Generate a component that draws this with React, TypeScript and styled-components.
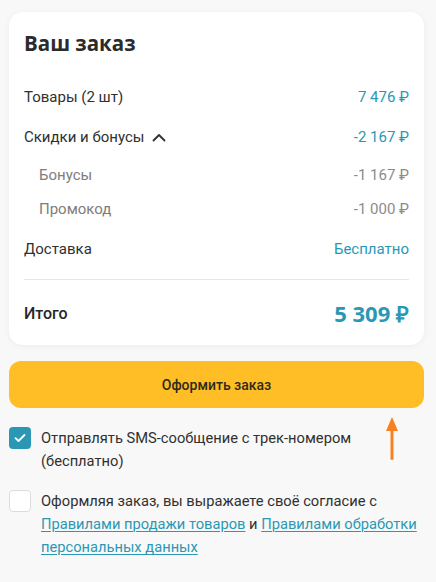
import React, { useState } from 'react';
import styled, { createGlobalStyle } from 'styled-components';

const GlobalStyle = createGlobalStyle`
  html, body {
    margin: 0;
    padding: 0;
    background: #f8f8f8;
  }
  body {
    font-family: Roboto, "Liberation Sans", sans-serif;
    color: #303030;
  }
`;

const Page = styled.div`
  width: 436px;
  min-height: 582px;
  box-sizing: border-box;
  padding: 12px 12px 0 9px;
  display: flex;
  flex-direction: column;
`;

const Card = styled.div`
  background: #ffffff;
  border-radius: 14px;
  box-shadow: 0 1px 6px rgba(0, 0, 0, 0.05);
  padding: 18px 15px 12px 15px;
  display: flex;
  flex-direction: column;
`;

const Title = styled.h2`
  margin: 0 0 21px 0;
  font-family: "Open Sans", sans-serif;
  font-weight: 700;
  font-size: 20.5px;
  line-height: 26px;
  color: #2b2b2b;
`;

const Row = styled.div<{ $sub?: boolean; $height: number }>`
  display: flex;
  align-items: center;
  justify-content: space-between;
  height: ${p => p.$height}px;
  padding-left: ${p => (p.$sub ? 15 : 0)}px;
  font-size: 15px;
  color: ${p => (p.$sub ? '#7d7d7d' : '#303030')};
`;

const Label = styled.span`
  display: flex;
  align-items: center;
  gap: 8px;
`;

const Amount = styled.span<{ $tone: 'accent' | 'muted' }>`
  font-size: 15px;
  font-weight: 400;
  color: ${p => (p.$tone === 'accent' ? '#2a98b4' : '#8c8c8c')};
`;

const Divider = styled.div`
  height: 1px;
  background: #e6e6e6;
  margin: 6px 0 13px 0;
`;

const TotalRow = styled.div`
  display: flex;
  align-items: center;
  justify-content: space-between;
  height: 40px;
`;

const TotalLabel = styled.span`
  font-size: 16px;
  font-weight: 500;
  color: #262626;
`;

const TotalValue = styled.span`
  font-family: "Open Sans", sans-serif;
  font-weight: 700;
  font-size: 22px;
  color: #2a98b4;
`;

const SubmitButton = styled.button`
  margin-top: 16px;
  height: 47px;
  border: none;
  border-radius: 12px;
  background: #ffbe26;
  font-family: Roboto, sans-serif;
  font-size: 14px;
  font-weight: 500;
  color: #2e2a1e;
  cursor: pointer;
`;

const Options = styled.div`
  position: relative;
  display: flex;
  flex-direction: column;
  gap: 17px;
  margin-top: 19px;
`;

const Option = styled.label<{ $gutter: number }>`
  display: flex;
  align-items: flex-start;
  gap: 10px;
  font-size: 14.7px;
  line-height: 23px;
  color: #303030;
  padding-right: ${p => p.$gutter}px;
  cursor: pointer;
`;

const Box = styled.span<{ $checked: boolean }>`
  flex: 0 0 auto;
  width: 22px;
  height: 22px;
  box-sizing: border-box;
  border-radius: 4px;
  background: ${p => (p.$checked ? '#2a98b4' : '#ffffff')};
  border: ${p => (p.$checked ? 'none' : '1.5px solid #dcdcdc')};
  display: flex;
  align-items: center;
  justify-content: center;
`;

const Link = styled.a`
  color: #2a98b4;
  text-decoration: underline;
  text-decoration-thickness: 1px;
  text-underline-offset: 2px;
`;

const Arrow = styled.svg`
  position: absolute;
  right: 25px;
  top: -10px;
`;

const Chevron = () => (
  <svg width="14" height="9" viewBox="0 0 14 9" fill="none">
    <path d="M1.5 7.5L7 2l5.5 5.5" stroke="#303030" strokeWidth="1.8" strokeLinecap="round" strokeLinejoin="round" />
  </svg>
);

const App: React.FC = () => {
  const [sms, setSms] = useState(true);
  const [agree, setAgree] = useState(false);

  return (
    <>
      <GlobalStyle />
      <Page>
        <Card>
          <Title>Ваш заказ</Title>
          <Row $height={40}>
            <span>Товары (2 шт)</span>
            <Amount $tone="accent">7 476 ₽</Amount>
          </Row>
          <Row $height={40}>
            <Label>Скидки и бонусы <Chevron /></Label>
            <Amount $tone="accent">-2 167 ₽</Amount>
          </Row>
          <Row $sub $height={36}>
            <span>Бонусы</span>
            <Amount $tone="muted">-1 167 ₽</Amount>
          </Row>
          <Row $sub $height={32}>
            <span>Промокод</span>
            <Amount $tone="muted">-1 000 ₽</Amount>
          </Row>
          <Row $height={48}>
            <span>Доставка</span>
            <Amount $tone="accent">Бесплатно</Amount>
          </Row>
          <Divider />
          <TotalRow>
            <TotalLabel>Итого</TotalLabel>
            <TotalValue>5 309 ₽</TotalValue>
          </TotalRow>
        </Card>

        <SubmitButton>Оформить заказ</SubmitButton>

        <Options>
          <Arrow width="14" height="44" viewBox="0 0 14 44">
            <path d="M7 0L13 14H1Z" fill="#f5821f" />
            <rect x="5.5" y="12" width="3" height="31" rx="1.5" fill="#f5821f" />
          </Arrow>
          <Option $gutter={40} onClick={() => setSms(!sms)}>
            <Box $checked={sms}>
              {sms && (
                <svg width="12" height="10" viewBox="0 0 12 10" fill="none">
                  <path d="M1.5 5.2L4.5 8l6-6" stroke="#fff" strokeWidth="1.8" strokeLinecap="round" strokeLinejoin="round" />
                </svg>
              )}
            </Box>
            <span>Отправлять SMS-сообщение с трек-номером (бесплатно)</span>
          </Option>
          <Option $gutter={0} onClick={() => setAgree(!agree)}>
            <Box $checked={agree} />
            <span>
              Оформляя заказ, вы выражаете своё согласие с{' '}
              <Link href="#">Правилами продажи товаров</Link> и{' '}
              <Link href="#">Правилами обработки персональных данных</Link>
            </span>
          </Option>
        </Options>
      </Page>
    </>
  );
};

export default App;
